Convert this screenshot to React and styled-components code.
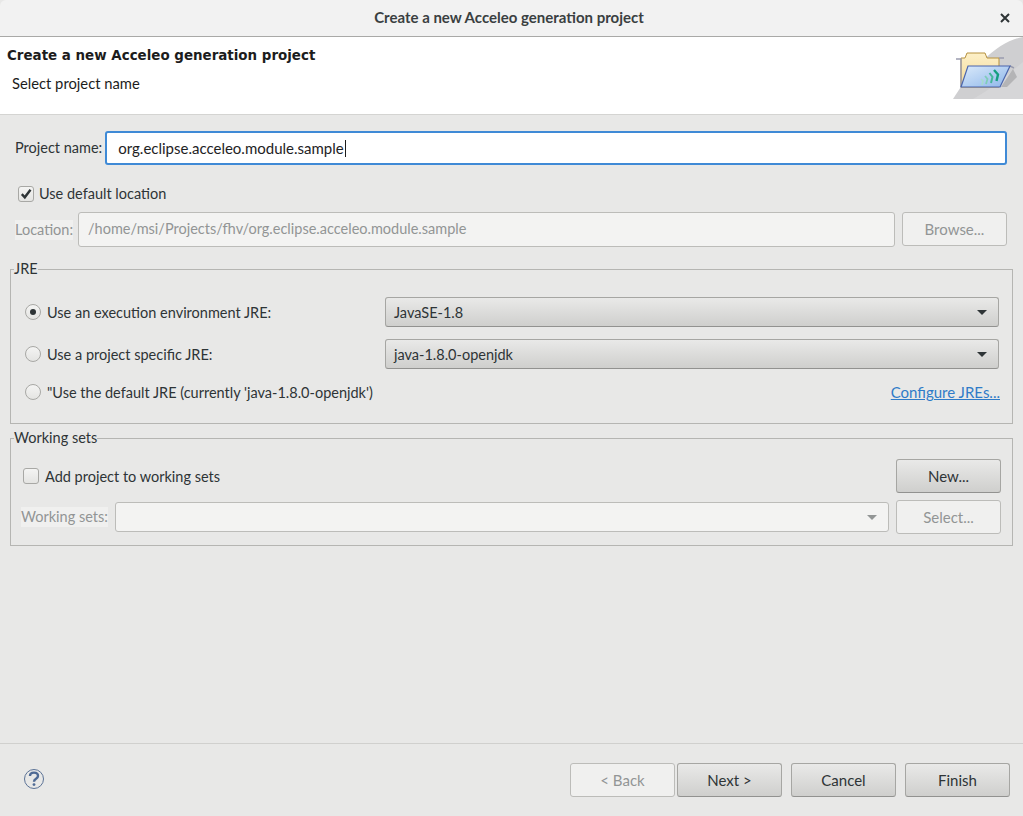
import React from 'react'
import styled, { createGlobalStyle } from 'styled-components'

const Global = createGlobalStyle`
  html, body { margin: 0; padding: 0; background: #e8e8e7; }
  body { font-family: "Lato", "Noto Sans", sans-serif; font-size: 14.5px; color: #2e3436; }
`

const Dialog = styled.div`
  width: 1023px;
  height: 816px;
  display: flex;
  flex-direction: column;
  overflow: hidden;
  background: #e8e8e7;
`

const TitleBar = styled.div`
  height: 34px;
  padding: 0 5px 2px 0;
  flex: none;
  display: flex;
  align-items: center;
  justify-content: center;
  position: relative;
  background: #f2f2f2;
  border-bottom: 1px solid #a9a9a7;
  border-radius: 6px 6px 0 0;
  font-weight: 700;
  font-size: 15px;
  color: #3a3f41;
`

const CloseButton = styled.svg`
  position: absolute;
  right: 13px;
  top: 13px;
  width: 10px;
  height: 10px;
`

const Banner = styled.div`
  height: 77px;
  flex: none;
  display: flex;
  justify-content: space-between;
  background: #fff;
  border-bottom: 1px solid #d4d4d2;
`

const BannerText = styled.div`
  padding: 10px 0 0 7px;
  color: #1c1c1c;
`

const BannerTitle = styled.div`
  font-family: "DejaVu Sans", sans-serif;
  font-weight: 700;
  font-size: 13.43px;
  line-height: 18px;
`

const BannerSubtitle = styled.div`
  margin: 9px 0 0 5px;
  font-size: 14.75px;
  line-height: 18px;
`

const Content = styled.div`
  flex: 1;
  display: flex;
  flex-direction: column;
  padding: 16px 10px 0;
`

const Row = styled.div`
  display: flex;
  align-items: center;
`

const ProjectRow = styled(Row)`
  padding: 0 6px 0 5px;
  gap: 3px;
`

const FieldLabel = styled.span`
  white-space: nowrap;
  line-height: 20px;
  color: ${p => (p.$disabled ? '#929595' : '#2e3436')};
  background: ${p => (p.$disabled ? '#f0f0ef' : 'transparent')};
`

const NameInput = styled.div`
  flex: 1;
  height: 30px;
  display: flex;
  align-items: center;
  padding-left: 11px;
  background: #fff;
  border: 2px solid #3f8ad6;
  border-radius: 3px;
  color: #1e2224;
  font-size: 15px;
`

const Caret = styled.span`
  width: 1px;
  height: 17px;
  margin-left: 1px;
  background: #1c1c1c;
`

const DefaultLocation = styled(Row)`
  margin-top: 20px;
  padding-left: 8px;
  gap: 5px;
`

const CheckBox = styled.span`
  width: 14px;
  height: 14px;
  flex: none;
  display: flex;
  align-items: center;
  justify-content: center;
  background: linear-gradient(#f4f4f3, #e4e4e2);
  border: 1px solid #a8a8a5;
  border-radius: 3px;
`

const LocationRow = styled(Row)`
  margin-top: 10px;
  padding: 0 6px 0 5px;
`

const DisabledInput = styled.div`
  flex: 1;
  height: 31px;
  padding: 0 0 2px 9px;
  margin-left: 5px;
  display: flex;
  align-items: center;
  background: #f3f3f2;
  border: 1px solid #bcbcb9;
  border-radius: 3px;
  color: #929595;
`

const Button = styled.div`
  width: 103px;
  height: 31px;
  padding-bottom: 1px;
  flex: none;
  display: flex;
  align-items: center;
  justify-content: center;
  font-size: 15px;
  border-radius: 3px;
  border: 1px solid ${p => (p.$disabled ? '#bcbcb9' : '#a6a6a3')};
  border-bottom-color: ${p => (p.$disabled ? '#bcbcb9' : '#929290')};
  background: ${p => (p.$disabled ? '#f0f0ef' : 'linear-gradient(#e9e9e8, #cfcfcd)')};
  color: ${p => (p.$disabled ? '#929595' : '#2e3436')};
`

const BrowseButton = styled(Button)`
  margin-left: 7px;
  align-self: flex-start;
`

const Group = styled.fieldset`
  margin: 0;
  padding: 0;
  min-width: 0;
  box-sizing: border-box;
  height: ${p => p.$height}px;
  margin-top: ${p => p.$top}px;
  border: 1px solid #b5b5b2;
`

const Legend = styled.legend`
  margin-left: 3px;
  padding: 0;
  line-height: 20px;
  color: #2e3436;
`

const JreRows = styled.div`
  padding: 18px 13px 0 14px;
`

const JreRow = styled(Row)`
  height: 30px;
  margin-bottom: ${p => p.$gap}px;
`

const RadioDot = styled.span`
  width: 14px;
  height: 14px;
  flex: none;
  margin-right: 6px;
  display: flex;
  align-items: center;
  justify-content: center;
  border: 1px solid #a8a8a5;
  border-radius: 50%;
  background: linear-gradient(#f4f4f3, #e4e4e2);
  &::after {
    content: '';
    display: ${p => (p.$checked ? 'block' : 'none')};
    width: 6px;
    height: 6px;
    border-radius: 50%;
    background: #2e3436;
  }
`

const RadioText = styled.span`
  flex: none;
  width: 338px;
  white-space: nowrap;
`

const Select = styled.div`
  flex: 1;
  height: 28px;
  display: flex;
  align-items: center;
  justify-content: space-between;
  padding: 0 11px 0 8px;
  border: 1px solid #a6a6a3;
  border-bottom-color: #929290;
  border-radius: 3px;
  background: linear-gradient(#e9e9e8, #cfcfcd);
`

const Arrow = styled.span`
  width: 0;
  height: 0;
  border-left: 5px solid transparent;
  border-right: 5px solid transparent;
  border-top: 5px solid ${p => (p.$disabled ? '#929595' : '#2e3436')};
`

const ConfigureLink = styled.a`
  margin-left: auto;
  margin-right: -1px;
  font-size: 15px;
  color: #2f7bc8;
  text-decoration: underline;
  white-space: nowrap;
`

const WorkingTop = styled(Row)`
  justify-content: space-between;
  padding: 11px 11px 0 12px;
`

const WorkingCheck = styled(Row)`
  gap: 6px;
`

const WorkingBottom = styled(Row)`
  margin-top: 7px;
  padding: 0 11px 0 10px;
`

const WorkingCombo = styled.div`
  flex: 1;
  height: 28px;
  margin: 0 7px 0 7px;
  display: flex;
  align-items: center;
  justify-content: flex-end;
  padding-right: 11px;
  background: #f3f3f2;
  border: 1px solid #bcbcb9;
  border-radius: 3px;
`

const Footer = styled.div`
  margin-top: auto;
  height: 53px;
  flex: none;
  display: flex;
  align-items: flex-start;
  margin-left: -10px;
  margin-right: -10px;
  padding: 19px 13px 0 23px;
  border-top: 1px solid #d0d0ce;
`

const HelpIcon = styled.svg`
  width: 22px;
  height: 22px;
  margin-top: 5px;
`

const FooterButtons = styled.div`
  margin-left: auto;
  display: flex;
  gap: 9px;
`

const NavPair = styled.div`
  display: flex;
  gap: 2px;
`

const FolderIcon = () => (
  <svg width="70" height="62" viewBox="0 0 70 62">
    <defs>
      <linearGradient id="tab" x1="0" y1="0" x2="0" y2="1">
        <stop offset="0" stopColor="#fdf0c8" />
        <stop offset="1" stopColor="#f2d998" />
      </linearGradient>
      <linearGradient id="front" x1="0" y1="0" x2="1" y2="1">
        <stop offset="0" stopColor="#dbeafa" />
        <stop offset="1" stopColor="#8db6ea" />
      </linearGradient>
    </defs>
    <path d="M70 0 C45 4 20 30 0 62 H70 Z" fill="#cfcfd1" />
    <path d="M70 25 C52 40 38 52 20 62 H70 Z" fill="#d6d6d8" />
    <path d="M48 50 L60 32 L64 40 L54 50 Z" fill="#b4b4b6" />
    <path d="M8 50 V21 H12 L14 16 H32 L34 21 H46 V50 Z" fill="url(#tab)" stroke="#b6913f" strokeWidth="1" />
    <path d="M3 22 H8 V50 M46 21 H51 M57 29 L61 31" fill="none" stroke="#9a9cae" strokeWidth="1.4" />
    <path d="M15 29 H57 L47 50 H8 Z" fill="url(#front)" stroke="#4a65ad" strokeWidth="1.2" />
    <path d="M28 42 L30 44 L29 48" fill="none" stroke="#a6dccd" strokeWidth="1.6" />
    <path d="M32 39 L34.5 42 L33 47" fill="none" stroke="#7fcdb8" strokeWidth="1.8" />
    <path d="M36.5 36 L39.5 40 L38 46" fill="none" stroke="#46b69a" strokeWidth="2" />
    <path d="M41 33 L45 37.5 L43.5 44" fill="none" stroke="#159f80" strokeWidth="2.4" />
  </svg>
)

const CheckMark = () => (
  <svg width="12" height="12" viewBox="0 0 12 12">
    <path d="M1.8 6.2 L4.8 9.3 L10.5 1.8" fill="none" stroke="#2e3436" strokeWidth="2.4" />
  </svg>
)

export default function App() {
  return (
    <Dialog>
      <Global />
      <TitleBar>
        Create a new Acceleo generation project
        <CloseButton viewBox="0 0 10 10">
          <path d="M1 1 L9 9 M9 1 L1 9" stroke="#2e3436" strokeWidth="2" />
        </CloseButton>
      </TitleBar>
      <Banner>
        <BannerText>
          <BannerTitle>Create a new Acceleo generation project</BannerTitle>
          <BannerSubtitle>Select project name</BannerSubtitle>
        </BannerText>
        <FolderIcon />
      </Banner>
      <Content>
        <ProjectRow>
          <FieldLabel>Project name:</FieldLabel>
          <NameInput>
            org.eclipse.acceleo.module.sample
            <Caret />
          </NameInput>
        </ProjectRow>
        <DefaultLocation>
          <CheckBox><CheckMark /></CheckBox>
          <span>Use default location</span>
        </DefaultLocation>
        <LocationRow>
          <FieldLabel $disabled>Location:</FieldLabel>
          <DisabledInput>/home/msi/Projects/fhv/org.eclipse.acceleo.module.sample</DisabledInput>
          <BrowseButton $disabled>Browse...</BrowseButton>
        </LocationRow>
        <Group $height={165} $top={12}>
          <Legend>JRE</Legend>
          <JreRows>
            <JreRow $gap={12}>
              <RadioDot $checked />
              <RadioText>Use an execution environment JRE:</RadioText>
              <Select>JavaSE-1.8<Arrow /></Select>
            </JreRow>
            <JreRow $gap={8}>
              <RadioDot />
              <RadioText>Use a project specific JRE:</RadioText>
              <Select>java-1.8.0-openjdk<Arrow /></Select>
            </JreRow>
            <JreRow $gap={0}>
              <RadioDot />
              <RadioText>"Use the default JRE (currently 'java-1.8.0-openjdk')</RadioText>
              <ConfigureLink>Configure JREs...</ConfigureLink>
            </JreRow>
          </JreRows>
        </Group>
        <Group $height={118} $top={4}>
          <Legend>Working sets</Legend>
          <WorkingTop>
            <WorkingCheck>
              <CheckBox />
              <span>Add project to working sets</span>
            </WorkingCheck>
            <Button>New...</Button>
          </WorkingTop>
          <WorkingBottom>
            <FieldLabel $disabled>Working sets:</FieldLabel>
            <WorkingCombo><Arrow $disabled /></WorkingCombo>
            <Button $disabled>Select...</Button>
          </WorkingBottom>
        </Group>
        <Footer>
          <HelpIcon viewBox="0 0 22 22">
            <circle cx="11" cy="11" r="9.5" fill="none" stroke="#5b7296" strokeWidth="1" />
            <path d="M7 8 C7 3.5 15 3.5 15 8 C15 11 11 10.5 11 13.7" fill="none" stroke="#4f6a94" strokeWidth="2.4" />
            <circle cx="11" cy="16.6" r="1.4" fill="#4f6a94" />
          </HelpIcon>
          <FooterButtons>
            <NavPair>
              <Button $disabled>&lt; Back</Button>
              <Button>Next &gt;</Button>
            </NavPair>
            <Button>Cancel</Button>
            <Button>Finish</Button>
          </FooterButtons>
        </Footer>
      </Content>
    </Dialog>
  )
}
